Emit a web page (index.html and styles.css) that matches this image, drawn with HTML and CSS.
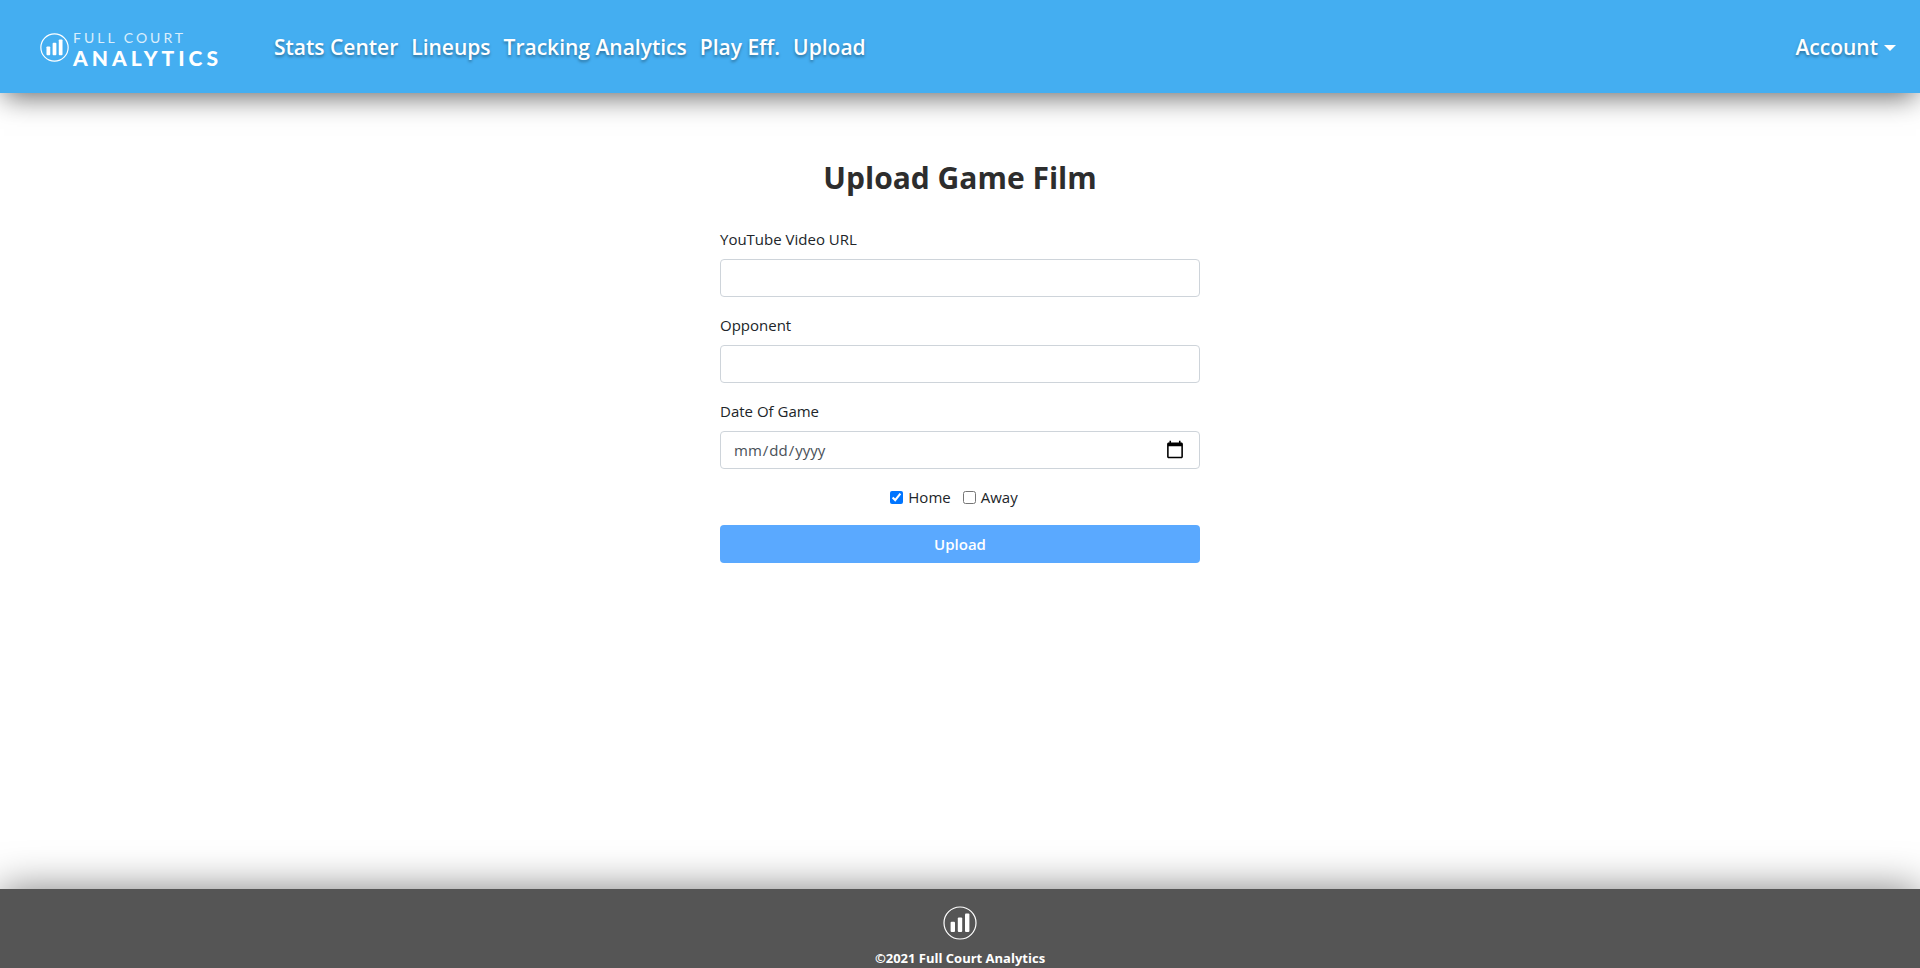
FILE: index.html
```html
<!DOCTYPE html>
<html lang="en">
<head>
<meta charset="utf-8">
<title>Upload Game Film</title>
<meta name="viewport" content="width=device-width, initial-scale=1">
<link rel="stylesheet" href="styles.css">
</head>
<body>
<header class="navbar">
  <a class="brand" href="#">
    <svg class="brand-icon" viewBox="0 0 34 34" aria-hidden="true">
      <circle cx="17" cy="17" r="16" fill="none" stroke="currentColor" stroke-width="1.4"/>
      <rect x="7.6" y="15.8" width="4.4" height="10.2" rx="1" fill="currentColor"/>
      <rect x="14.8" y="11.5" width="4.4" height="14.5" rx="1" fill="currentColor"/>
      <rect x="22" y="7.6" width="4.4" height="18.4" rx="1" fill="currentColor"/>
    </svg>
    <span class="brand-text">
      <span class="brand-top">FULL COURT</span>
      <span class="brand-bottom">ANALYTICS</span>
    </span>
  </a>
  <nav class="links">
    <a href="#">Stats Center</a>
    <a href="#">Lineups</a>
    <a href="#">Tracking Analytics</a>
    <a href="#">Play Eff.</a>
    <a href="#">Upload</a>
  </nav>
  <button class="account" type="button">Account<span class="caret"></span></button>
</header>
<main class="content">
  <form class="form">
    <h1 class="title">Upload Game Film</h1>
    <div class="group">
      <label for="url">YouTube Video URL</label>
      <input class="control" id="url" type="text">
    </div>
    <div class="group">
      <label for="opponent">Opponent</label>
      <input class="control" id="opponent" type="text">
    </div>
    <div class="group">
      <label for="date">Date Of Game</label>
      <input class="control" id="date" type="date">
    </div>
    <div class="checks">
      <label class="check"><input type="checkbox" checked>Home</label>
      <label class="check"><input type="checkbox">Away</label>
    </div>
    <button class="submit" type="submit">Upload</button>
  </form>
</main>
<footer class="footer">
  <svg class="footer-icon" viewBox="0 0 34 34" aria-hidden="true">
    <circle cx="17" cy="17" r="16" fill="none" stroke="currentColor" stroke-width="1.2"/>
    <rect x="7.6" y="15.8" width="4.4" height="10.2" rx="1" fill="currentColor"/>
    <rect x="14.8" y="11.5" width="4.4" height="14.5" rx="1" fill="currentColor"/>
    <rect x="22" y="7.6" width="4.4" height="18.4" rx="1" fill="currentColor"/>
  </svg>
  <span>©2021 Full Court Analytics</span>
</footer>
</body>
</html>
```
FILE: styles.css
```css
* { box-sizing: border-box; }

body {
  margin: 0;
  min-height: 100vh;
  display: flex;
  flex-direction: column;
  background: #fff;
  color: #212529;
  font: 15px/24px "Open Sans", "Noto Sans", sans-serif;
}

.navbar {
  display: flex;
  align-items: center;
  padding: 24px 24px 22px 40px;
  background: #44aef1;
  color: #fff;
  box-shadow: 0 8px 26px -4px rgba(0, 0, 0, 0.6);
}

.brand {
  display: flex;
  align-items: center;
  gap: 4px;
  margin-right: 52px;
  color: #fff;
  text-decoration: none;
}

.brand-icon {
  width: 29px;
  height: 29px;
}

.brand-text {
  display: flex;
  flex-direction: column;
  font-family: Lato, sans-serif;
}

.brand-top {
  font-size: 14px;
  line-height: 20px;
  letter-spacing: 3px;
  opacity: 0.8;
}

.brand-bottom {
  font-size: 21px;
  font-weight: 900;
  line-height: 20px;
  letter-spacing: 4px;
}

.links {
  display: flex;
  gap: 13px;
}

.links a,
.account {
  color: #fff;
  font: 600 21px/47px "Open Sans", "Noto Sans", sans-serif;
  text-decoration: none;
  text-shadow: 0 2px 3px rgba(0, 0, 0, 0.35);
}

.account {
  display: flex;
  align-items: center;
  gap: 6px;
  margin-left: auto;
  padding: 0;
  border: 0;
  background: none;
}

.caret {
  border: 6px solid transparent;
  border-top-color: #fff;
  border-bottom: 0;
}

.content {
  flex: 1;
  padding: 64px 16px;
}

.form {
  display: flex;
  flex-direction: column;
  gap: 16px;
  max-width: 480px;
  margin: 0 auto;
}

.title {
  margin: 0 0 12px;
  color: #2d2d2d;
  font-size: 30px;
  line-height: 42px;
  text-align: center;
}

.group {
  display: flex;
  flex-direction: column;
  gap: 8px;
}

.control {
  width: 100%;
  height: 38px;
  padding: 6px 12px;
  border: 1px solid #ced4da;
  border-radius: 4px;
  background: #fff;
  color: #495057;
  font: inherit;
}

.control::-webkit-calendar-picker-indicator {
  width: 20px;
  height: 20px;
}

.checks {
  display: flex;
  justify-content: center;
  gap: 12px;
  padding-right: 12px;
}

.check {
  display: flex;
  align-items: center;
  gap: 5px;
}

.check input {
  width: 13px;
  height: 13px;
  margin: 0;
}

.submit {
  height: 38px;
  border: 0;
  border-radius: 4px;
  background: #5aa9ff;
  color: #fff;
  font: 600 15px/24px "Open Sans", "Noto Sans", sans-serif;
}

.footer {
  display: flex;
  flex-direction: column;
  align-items: center;
  gap: 8px;
  padding-top: 17px;
  background: #555;
  color: #fff;
  font-size: 13px;
  font-weight: 700;
  line-height: 20px;
  box-shadow: 0 0 40px rgba(0, 0, 0, 0.5);
}

.footer-icon {
  width: 34px;
  height: 34px;
}
```
